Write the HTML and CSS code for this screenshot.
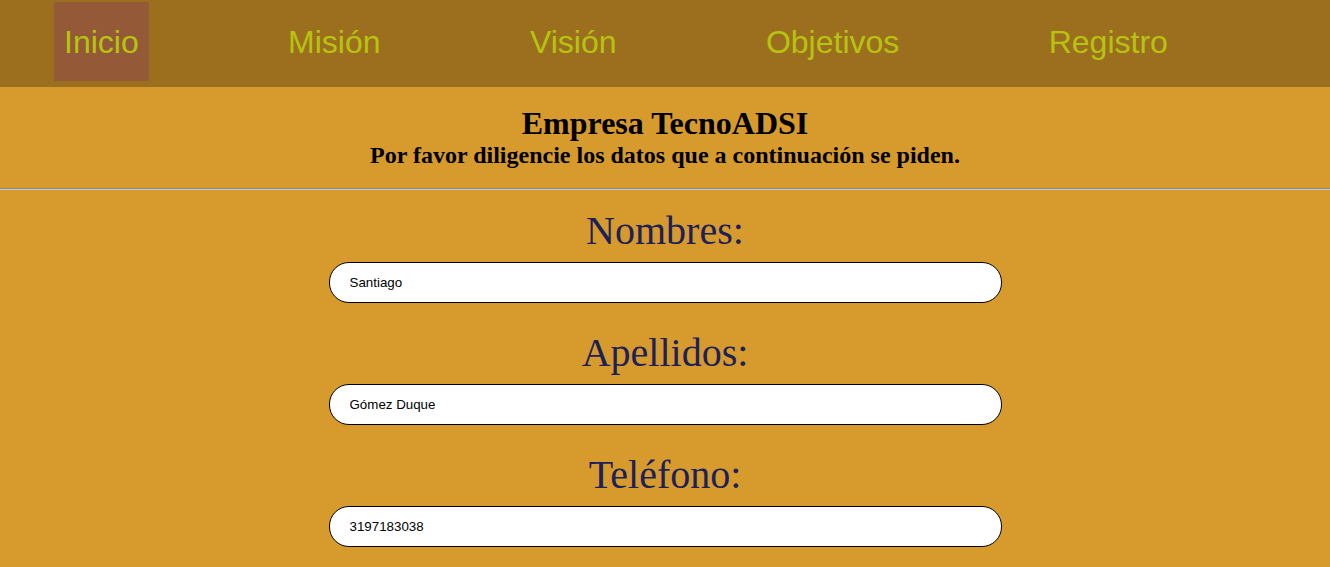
FILE: index.html
```html
<!DOCTYPE html>
<html lang="es">
<head>
<meta charset="utf-8">
<title>Empresa TecnoADSI</title>
<link rel="stylesheet" href="styles.css">
</head>
<body>
<nav class="menu">
  <a class="menu-item active" href="#">Inicio</a>
  <a class="menu-item" href="#">Misión</a>
  <a class="menu-item" href="#">Visión</a>
  <a class="menu-item" href="#">Objetivos</a>
  <a class="menu-item" href="#">Registro</a>
</nav>
<header class="intro">
  <h1 class="title">Empresa TecnoADSI</h1>
  <h2 class="subtitle">Por favor diligencie los datos que a continuación se piden.</h2>
</header>
<hr class="divider">
<form class="form">
  <div class="field">
    <label class="label" for="nombres">Nombres:</label>
    <input class="input" id="nombres" type="text" value="Santiago">
  </div>
  <div class="field">
    <label class="label" for="apellidos">Apellidos:</label>
    <input class="input" id="apellidos" type="text" value="Gómez Duque">
  </div>
  <div class="field">
    <label class="label" for="telefono">Teléfono:</label>
    <input class="input" id="telefono" type="text" value="3197183038">
  </div>
</form>
</body>
</html>
```
FILE: styles.css
```css
html, body {
  margin: 0;
  padding: 0;
}
body {
  background: #d69a2d;
  font-family: "Liberation Serif", "Times New Roman", serif;
  overflow: hidden;
}
.menu {
  display: flex;
  align-items: flex-start;
  gap: 129.4px;
  height: 87px;
  box-sizing: border-box;
  padding: 2px 0 0 54px;
  background: #9c6f1f;
}
.menu-item {
  display: block;
  height: 77px;
  line-height: 77px;
  padding: 2px 10px 0;
  font-family: "Liberation Sans", Arial, sans-serif;
  font-size: 32px;
  color: #b6c30f;
  text-decoration: none;
}
.menu-item.active {
  background: #945a37;
}
.intro {
  padding-top: 18px;
  text-align: center;
}
.title {
  margin: 0;
  font-size: 32px;
  font-weight: bold;
  color: #000;
}
.subtitle {
  margin: 0;
  font-size: 24px;
  font-weight: bold;
  color: #000;
}
.divider {
  margin: 19px 0 0;
  border: 0;
  border-top: 1px solid #8a8a8a;
  border-bottom: 1px solid #c9c9c9;
  height: 0;
}
.form {
  display: flex;
  flex-direction: column;
  align-items: center;
  padding-top: 18px;
  gap: 27px;
}
.field {
  display: flex;
  flex-direction: column;
  align-items: center;
  gap: 8px;
}
.label {
  font-size: 40px;
  color: #1d215a;
  line-height: 46px;
}
.input {
  box-sizing: border-box;
  width: 673px;
  height: 41px;
  border: 1px solid #000;
  border-radius: 20px;
  background: #fff;
  padding: 0 20px;
  font-family: "Liberation Sans", Arial, sans-serif;
  font-size: 13.33px;
  color: #000;
  outline: none;
}
```
